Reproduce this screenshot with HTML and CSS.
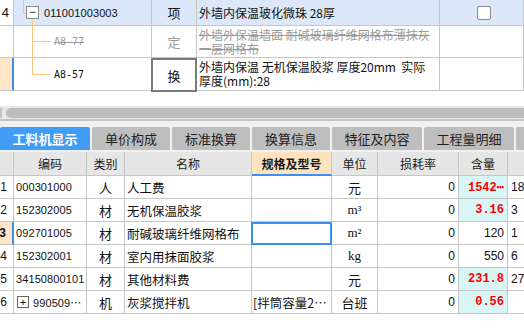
FILE: index.html
```html
<!DOCTYPE html>
<html lang="zh-CN">
<head>
<meta charset="utf-8">
<title>工料机显示</title>
<link rel="stylesheet" href="styles.css">
</head>
<body>
<div class="page">
  <div class="top">
    <div class="tgrid">
      <div class="c num">4</div>
      <div class="c hl tree"><span class="fold">−</span><span class="code">011001003003</span></div>
      <div class="c hl ctr">项</div>
      <div class="c hl desc">外墙内保温玻化微珠 28厚</div>
      <div class="c hl ctr"><span class="chk"></span></div>

      <div class="c num"></div>
      <div class="c tree sub gray"><span class="mono strike">A8-77</span></div>
      <div class="c ctr gray">定</div>
      <div class="c desc gray strike">外墙外保温墙面 耐碱玻璃纤维网格布薄抹灰一层网格布</div>
      <div class="c"></div>

      <div class="c num sel"></div>
      <div class="c tree sub"><span class="mono">A8-57</span></div>
      <div class="c ctr huan">换</div>
      <div class="c desc">外墙内保温 无机保温胶浆 厚度20mm&nbsp;&nbsp;实际厚度(mm):28</div>
      <div class="c"></div>
    </div>
    <svg class="lines" width="60" height="91" viewBox="0 0 60 91">
      <path d="M23.5 0 V13.5 H26 M32.5 20 V74.5 H50 M32.5 41.5 H50" fill="none" stroke="#ffc47c" stroke-width="1"/>
    </svg>
  </div>

  <div class="spacer"></div>

  <div class="hscroll">
    <div class="harrow"></div>
    <div class="thumb"></div>
  </div>

  <div class="tabs">
    <div class="tab on w90">工料机显示</div>
    <div class="tab w78">单价构成</div>
    <div class="tab w78">标准换算</div>
    <div class="tab w77">换算信息</div>
    <div class="tab w90">特征及内容</div>
    <div class="tab w90">工程量明细</div>
    <div class="tab w90"></div>
  </div>

  <div class="bwrap">
    <div class="bgrid">
      <div class="h"></div>
      <div class="h">编码</div>
      <div class="h">类别</div>
      <div class="h">名称</div>
      <div class="h hsel">规格及型号</div>
      <div class="h">单位</div>
      <div class="h">损耗率</div>
      <div class="h">含量</div>
      <div class="h"></div>

      <div class="b rn">1</div>
      <div class="b code">000301000</div>
      <div class="b ctr">人</div>
      <div class="b name">人工费</div>
      <div class="b"></div>
      <div class="b ctr">元</div>
      <div class="b rt">0</div>
      <div class="b rt red cy">1542⋯</div>
      <div class="b ex">18</div>

      <div class="b rn">2</div>
      <div class="b code">152302005</div>
      <div class="b ctr">材</div>
      <div class="b name">无机保温胶浆</div>
      <div class="b"></div>
      <div class="b ctr unit">m³</div>
      <div class="b rt">0</div>
      <div class="b rt red cy">3.16</div>
      <div class="b ex">3</div>

      <div class="b rn rsel">3</div>
      <div class="b code">092701005</div>
      <div class="b ctr">材</div>
      <div class="b name">耐碱玻璃纤维网格布</div>
      <div class="b csel"></div>
      <div class="b ctr unit">m²</div>
      <div class="b rt">0</div>
      <div class="b rt">120</div>
      <div class="b ex">1</div>

      <div class="b rn">4</div>
      <div class="b code">152302001</div>
      <div class="b ctr">材</div>
      <div class="b name">室内用抹面胶浆</div>
      <div class="b"></div>
      <div class="b ctr unit">kg</div>
      <div class="b rt">0</div>
      <div class="b rt">550</div>
      <div class="b ex">6</div>

      <div class="b rn">5</div>
      <div class="b code">34150800101</div>
      <div class="b ctr">材</div>
      <div class="b name">其他材料费</div>
      <div class="b"></div>
      <div class="b ctr">元</div>
      <div class="b rt">0</div>
      <div class="b rt red cy">231.8</div>
      <div class="b ex">27</div>

      <div class="b rn">6</div>
      <div class="b code"><span class="plus">+</span>990509⋯</div>
      <div class="b ctr">机</div>
      <div class="b name">灰浆搅拌机</div>
      <div class="b spec">[拌筒容量2⋯</div>
      <div class="b ctr">台班</div>
      <div class="b rt">0</div>
      <div class="b rt red cy">0.56</div>
      <div class="b ex"></div>
    </div>
  </div>
</div>
</body>
</html>
```

FILE: styles.css
```css
* { box-sizing: border-box; }
html, body { margin: 0; padding: 0; background: #fff; }
body {
  width: 524px;
  height: 331px;
  overflow: hidden;
  font-family: "Liberation Sans", "Noto Sans CJK SC", sans-serif;
  font-size: 12px;
  color: #111;
}
.page { width: 524px; overflow: hidden; }

/* ---------- top tree table ---------- */
.top { position: relative; }
.tgrid {
  display: grid;
  grid-template-columns: 14px 138px 45px 243px 84px;
  grid-template-rows: 26px 32px 33px;
}
.c {
  border-right: 1px solid #c6c6c6;
  border-bottom: 1px solid #c6c6c6;
  display: flex;
  align-items: center;
  overflow: hidden;
  white-space: nowrap;
}
.hl { background: #dce8fa; }
.num {
  justify-content: flex-end;
  padding-right: 4px;
  font-size: 13px;
}
.num.sel {
  background: #fde5c6;
  border-right: 2px solid #3a8ff0;
}
.ctr { justify-content: center; font-size: 13px; }
.gray { color: #9a9a9a; }
.strike { text-decoration: line-through; }
.tree { padding-left: 12px; }
.tree.sub { padding-left: 40px; }
.fold {
  width: 13px;
  height: 13px;
  border: 1px solid #8a8a8a;
  background: #fff;
  display: inline-flex;
  align-items: center;
  justify-content: center;
  font-size: 12px;
  line-height: 1;
  color: #333;
  margin-right: 5px;
  margin-top: -1px;
}
.code { font-size: 11px; letter-spacing: 0.1px; }
.mono { font-family: "DejaVu Sans Mono", monospace; font-size: 10px; }
.desc {
  white-space: normal;
  font-family: "Noto Sans CJK SC", sans-serif;
  font-size: 12px;
  line-height: 14px;
  padding-left: 2px;
  padding-right: 4px;
}
.huan {
  border: 2px solid #7b7b7b;
  margin-left: -1px;
  margin-bottom: -1px;
}
.chk {
  width: 14px;
  height: 14px;
  border: 1px solid #8c8c8c;
  border-radius: 2px;
  background: #fff;
  margin-left: 5px;
  margin-top: 1px;
}
.lines { position: absolute; left: 0; top: 0; pointer-events: none; }

.spacer { height: 15px; }

/* ---------- horizontal scrollbar ---------- */
.hscroll {
  height: 15px;
  background: #e8e8e8;
  border-bottom: 2px solid #c3c3c3;
  display: flex;
  align-items: flex-start;
  padding-top: 2px;
}
.harrow { width: 2px; height: 10px; background: #c2c2c2; margin-right: 4px; }
.thumb { flex: 1; height: 10px; background: #bdbdbd; border-radius: 5px 0 0 5px; }

/* ---------- tabs ---------- */
.tabs {
  display: flex;
  gap: 2px;
  background: #f0f0f0;
  padding-top: 6px;
  height: 30px;
  overflow: hidden;
}
.tab {
  flex: none;
  height: 23px;
  background: #bebebe;
  border-radius: 2px 2px 0 0;
  display: flex;
  align-items: center;
  justify-content: center;
  font-family: "Noto Sans CJK SC", sans-serif;
  font-size: 13px;
  color: #1e1e1e;
}
.tab.on { background: #419cf6; color: #fff; font-weight: bold; }
.w90 { width: 90px; }
.w78 { width: 78px; }
.w77 { width: 78px; }
.tabs .tab:nth-child(4) { width: 78px; }

/* ---------- bottom table ---------- */
.bwrap { width: 524px; overflow: hidden; background: #fff; border-top: 1px solid #f0f0f0; }
.bgrid {
  display: grid;
  width: 548px;
  grid-template-columns: 14px 73px 38px 127px 80px 46px 81px 49px 40px;
  grid-template-rows: 24px repeat(6, 23px);
}
.h {
  background: #e6e6e6;
  border-right: 1px solid #c6c6c6;
  border-bottom: 1px solid #c6c6c6;
  display: flex;
  align-items: center;
  justify-content: center;
  font-family: "Noto Sans CJK SC", sans-serif;
  font-size: 12px;
  color: #1a1a1a;
  white-space: nowrap;
  overflow: hidden;
}
.h.hsel {
  background: #fde3c0;
  font-weight: bold;
  border-bottom: 2px solid #3a8ff0;
}
.b {
  border-right: 1px solid #c6c6c6;
  border-bottom: 1px solid #c6c6c6;
  display: flex;
  align-items: center;
  white-space: nowrap;
  overflow: hidden;
  font-size: 12px;
}
.b.ctr { justify-content: center; font-family: "Noto Sans CJK SC", sans-serif; font-size: 13px; }
.b.unit { font-family: "Liberation Serif", serif; font-size: 13px; }
.rn { justify-content: flex-end; padding-right: 6px; }
.rn.rsel { background: #fde5c6; font-weight: bold; border-right: 2px solid #3a8ff0; }
.b.code { padding-left: 2px; font-size: 11px; }
.b.name { padding-left: 2px; font-family: "Noto Sans CJK SC", sans-serif; font-size: 12.5px; }
.b.spec { padding-left: 1px; font-family: "Noto Sans CJK SC", sans-serif; font-size: 12.5px; }
.b.rt { justify-content: flex-end; padding-right: 3px; font-size: 12px; }
.b.ex { padding-left: 3px; }
.red {
  color: #f00;
  font-weight: bold;
  font-family: "Liberation Mono", monospace;
  font-size: 12px;
}
.cy { background: #d9f6f7; }
.csel {
  border: 2px solid #3a8ff0;
  margin-left: -1px;
}
.plus {
  width: 12px;
  height: 12px;
  border: 1px solid #666;
  display: inline-flex;
  align-items: center;
  justify-content: center;
  font-size: 11px;
  line-height: 1;
  margin-right: 4px;
  margin-left: 1px;
}
```
